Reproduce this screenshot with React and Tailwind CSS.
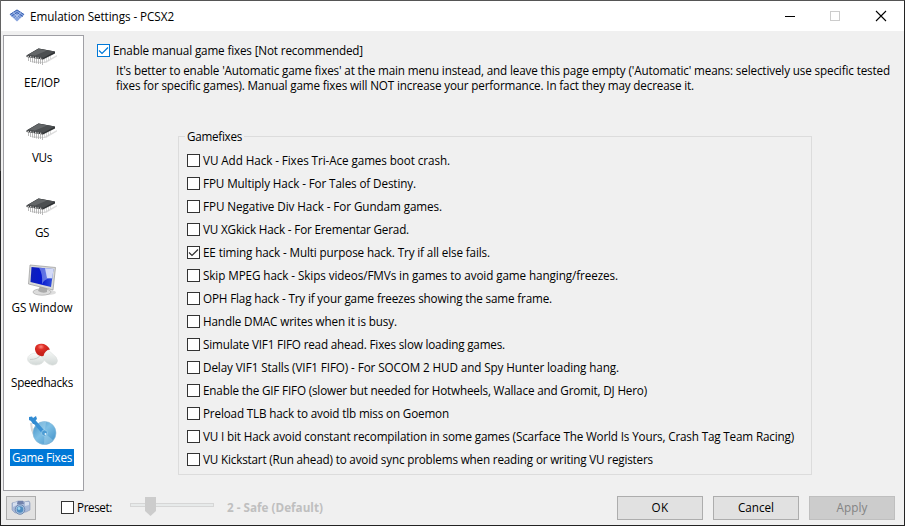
import { useLayoutEffect, useRef } from 'react';

// Text whose tracking is fitted to a given line width.
function Line({ w, className = '', children }) {
  const ref = useRef(null);
  useLayoutEffect(() => {
    const el = ref.current;
    el.style.letterSpacing = '0px';
    const natural = el.getBoundingClientRect().width;
    el.style.letterSpacing = `${(w - natural) / children.length}px`;
  }, [w, children]);
  return (
    <span ref={ref} className={`inline-block whitespace-pre ${className}`}>
      {children}
    </span>
  );
}

function Chip() {
  return (
    <svg width="32" height="32" viewBox="0 0 32 32">
      <path d="M4 22L18 23L31 16L31 17.500L20 24L8 24Z" fill="#dedede" />
      <path d="M2.500 18v4M4.500 18.500v4.500M6.500 19v4.500M8.500 19v5M10.500 19.500v5M12.500 20v5M14.500 20v5M16.500 20v6" stroke="#a8a8a8" strokeWidth=".8" />
      <path d="M18.500 20v4M20.500 19v4M22.500 18v4M24.500 17v3" stroke="#cacaca" strokeWidth=".7" />
      <path d="M0.500 16.500L12.500 9.500L29 12.500V14.500L17 20.500L0.500 18Z" fill="#303335" />
      <path d="M0.500 16.500L12.500 9.500L29 12.500L17.500 18.800Z" fill="#4c4f51" />
      <path d="M3 15.500L12.500 10L21 11.500L9 16.500Z" fill="#75787a" opacity=".6" />
      <path d="M1.500 17.300L16.500 19.500" stroke="#c6c6c6" strokeWidth="1.200" strokeDasharray="1.500 1" />
    </svg>
  );
}

function Monitor() {
  return (
    <svg width="32" height="32" viewBox="0 0 32 32">
      <defs>
        <linearGradient id="screen" x1="0" x2="1">
          <stop offset="0" stopColor="#1020b8" />
          <stop offset=".5" stopColor="#0618d0" />
          <stop offset="1" stopColor="#3857dc" />
        </linearGradient>
      </defs>
      <ellipse cx="22" cy="28.500" rx="8" ry="2.500" fill="#bbb" opacity=".5" />
      <ellipse cx="16" cy="28" rx="9" ry="3.200" fill="#dcdcdc" stroke="#aaa" strokeWidth=".7" />
      <path d="M14 22L21 24L21 28Q17 30 12 27Z" fill="#aaa" />
      <path d="M4 1L29.500 3.500L27 26L2.500 20Z" fill="#d8d9d8" stroke="#999" strokeWidth=".7" />
      <path d="M5.500 3L27.500 5L25 23L4.500 18Z" fill="url(#screen)" />
      <path d="M13 3.800L27.500 5L26.200 15Q18 14 16 20.500Q17 10 13 3.800Z" fill="#98aaf0" opacity=".6" />
      <path d="M19 4.300L27.500 5L26.200 14L21 14Z" fill="#fff" opacity=".7" />
    </svg>
  );
}

function Pills() {
  return (
    <svg width="32" height="32" viewBox="0 0 32 32">
      <defs>
        <radialGradient id="red" cx=".4" cy=".25">
          <stop offset="0" stopColor="#ff8a80" />
          <stop offset=".45" stopColor="#df3028" />
          <stop offset="1" stopColor="#c8221b" />
        </radialGradient>
        <linearGradient id="pill" x1="0" y1="0" x2="0" y2="1">
          <stop offset="0" stopColor="#fcfdfc" />
          <stop offset="1" stopColor="#d0d7d5" />
        </linearGradient>
      </defs>
      <ellipse cx="10" cy="20" rx="8.500" ry="6" fill="url(#pill)" stroke="#dde0df" strokeWidth=".6" />
      <path d="M4 20.500Q12 20.500 15 15.500" stroke="#c9cecc" fill="none" />
      <path d="M21 10L30 18Q33 22 30 25Q25 28 20 23L15 17Z" fill="url(#pill)" stroke="#d8dddb" strokeWidth=".5" />
      <path d="M9.500 12.500Q7.500 6.500 13 5Q20 3.500 24 10.500Q19 11 17.500 17Q12 18 9.500 12.500Z" fill="url(#red)" />
    </svg>
  );
}

function Disc() {
  return (
    <svg width="32" height="32" viewBox="0 0 32 32">
      <defs>
        <linearGradient id="disc" x1="0" y1="0" x2="1" y2="1">
          <stop offset="0" stopColor="#3e8dc5" />
          <stop offset=".45" stopColor="#7fc0e5" />
          <stop offset="1" stopColor="#3a8cc6" />
        </linearGradient>
      </defs>
      <path d="M5 9L6 16L9 23" stroke="#d8d8d8" strokeWidth="2" fill="none" />
      <circle cx="18.500" cy="19" r="11.500" fill="url(#disc)" stroke="#8abbd8" strokeWidth=".6" />
      <path d="M18.500 19L10 11Q15 7 20 8ZM18.500 19L27 26Q24 30 18 30Z" fill="#b6def2" opacity=".4" />
      <path d="M7 6L18 19" stroke="#3b91d4" strokeWidth="3.500" />
      <path d="M3 3L6 2.500L7 4L10 2L11 5L9 7L12 10L7 10L5 7L3 6Z" fill="#328bd2" />
      <circle cx="18.500" cy="19" r="3" fill="#4b9bd3" stroke="#a3d3ed" strokeWidth=".7" />
      <circle cx="19.500" cy="20" r="1" fill="#e3f4fc" />
    </svg>
  );
}

function Camera() {
  return (
    <svg width="20" height="16" viewBox="0 0 20 16">
      <path d="M1 3L5 2L7 1H12L13 2L18 1L19 3V10L15 12L4 13L1 10Z" fill="#a9b9d8" stroke="#8798bb" strokeWidth=".6" />
      <path d="M2 3L6 2V5L2 7ZM14 2L18 2V5L14 6Z" fill="#d5deee" />
      <path d="M7 1H12L13 4H6Z" fill="#7182ab" />
      <circle cx="9" cy="9.500" r="4.800" fill="#a9c3df" stroke="#6681ac" strokeWidth=".9" />
      <circle cx="9" cy="9.500" r="3.300" fill="#4f8cc0" />
      <circle cx="8" cy="8.500" r="1.400" fill="#9fd4ee" />
    </svg>
  );
}

function Logo() {
  return (
    <svg width="16" height="16" viewBox="0 0 16 16">
      <path d="M0.500 6.500L8 1.500L15.500 6.500L8 13.500Z" fill="#86a3de" />
      <path d="M1 6.500L8 2L15 6.500M2.500 8L8 4.500L14 8.500M5 10L8 7.500L11 10" fill="none" stroke="#3a62b3" strokeWidth="1" />
      <path d="M4 4.500L11 10.500M12 4.500L5 10.500" stroke="#c5d5f2" strokeWidth=".8" />
    </svg>
  );
}

function Box({ checked, blue }) {
  return (
    <span className={`block size-[13px] shrink-0 border bg-white ${blue ? 'border-[#0078d7] text-[#0078d7]' : 'border-[#333] text-[#333]'}`}>
      {checked && (
        <svg width="11" height="11" viewBox="0 0 11 11">
          <path d="M1 5.500L4 8.500L10 2.500" fill="none" stroke="currentColor" strokeWidth="1.200" />
        </svg>
      )}
    </span>
  );
}

const pages = [
  ['EE/IOP', 36, Chip],
  ['VUs', 20, Chip],
  ['GS', 14, Chip],
  ['GS Window', 61, Monitor],
  ['Speedhacks', 62, Pills],
  ['Game Fixes', 60, Disc],
];

const fixes = [
  ['VU Add Hack - Fixes Tri-Ace games boot crash.', 247],
  ['FPU Multiply Hack - For Tales of Destiny.', 213],
  ['FPU Negative Div Hack - For Gundam games.', 239],
  ['VU XGkick Hack - For Erementar Gerad.', 206],
  ['EE timing hack - Multi purpose hack. Try if all else fails.', 287],
  ['Skip MPEG hack - Skips videos/FMVs in games to avoid game hanging/freezes.', 415],
  ['OPH Flag hack - Try if your game freezes showing the same frame.', 349],
  ['Handle DMAC writes when it is busy.', 194],
  ['Simulate VIF1 FIFO read ahead. Fixes slow loading games.', 302],
  ['Delay VIF1 Stalls (VIF1 FIFO) - For SOCOM 2 HUD and Spy Hunter loading hang.', 416],
  ['Enable the GIF FIFO (slower but needed for Hotwheels, Wallace and Gromit, DJ Hero)', 444],
  ['Preload TLB hack to avoid tlb miss on Goemon', 246],
  ['VU I bit Hack avoid constant recompilation in some games (Scarface The World Is Yours, Crash Tag Team Racing)', 591],
  ['VU Kickstart (Run ahead) to avoid sync problems when reading or writing VU registers', 450],
];

export default function App() {
  return (
    <div className="h-[526px] w-[905px] bg-[linear-gradient(#666_0,#555_147px,#555_171px,#232323_171px)] pl-px">
      <div className="flex h-[526px] w-[904px] flex-col border-y border-r border-[#232323] border-t-[#555] bg-[#f0f0f0] font-['Open_Sans','Noto_Sans',sans-serif] text-[11.7px] leading-[15px] text-black">
        <header className="flex h-[30px] shrink-0 items-center bg-white pl-2">
          <Logo />
          <Line w={144} className="ml-[5px]">Emulation Settings - PCSX2</Line>
          <svg className="mb-px ml-auto mr-[17px]" width="102" height="12" viewBox="0 0 102 12" fill="none" shapeRendering="crispEdges">
            <path d="M0 6.500H10" stroke="#000" />
            <rect x="45.500" y="1.500" width="9" height="9" stroke="#ccc" />
            <path d="M91 1L101 11M101 1L91 11" stroke="#000" shapeRendering="auto" strokeWidth="1.100" />
          </svg>
        </header>

        <div className="flex h-[460px] shrink-0">
          <nav className="ml-0.5 mt-1 flex h-[456px] w-[81px] shrink-0 flex-col border border-[#a0a0a5] bg-white pr-[3px] pt-[3px]">
            {pages.map(([name, w, Icon], i) => (
              <div key={name} className="flex h-[75px] shrink-0 flex-col items-center">
                <Icon />
                <span className={`mt-[3px] flex h-[17px] items-center px-0.5 pb-px ${i === 5 ? 'bg-[#0078d7] text-white' : ''}`}>
                  <Line w={w}>{name}</Line>
                </span>
              </div>
            ))}
          </nav>

          <main className="flex flex-1 flex-col pl-[13px] pt-3">
            <label className="flex h-[15px] items-center gap-[3px]">
              <Box checked blue />
              <Line w={250}>Enable manual game fixes [Not recommended]</Line>
            </label>
            <div className="ml-[19px] mt-[5px] flex flex-col items-start">
              <Line w={774}>It's better to enable 'Automatic game fixes' at the main menu instead, and leave this page empty ('Automatic' means: selectively use specific tested</Line>
              <Line w={578}>fixes for specific games). Manual game fixes will NOT increase your performance. In fact they may decrease it.</Line>
            </div>
            <fieldset className="ml-[81px] mt-[36px] h-[346px] w-[634px] border border-[#dcdcdc] pl-2">
              <legend className="-ml-0.5 h-[15px] px-0.5">
                <Line w={55}>Gamefixes</Line>
              </legend>
              <div className="mt-[5px] flex flex-col">
                {fixes.map(([text, w], i) => (
                  <label key={text} className="flex h-[23px] items-center gap-[3px]">
                    <Box checked={i === 4} />
                    <Line w={w}>{text}</Line>
                  </label>
                ))}
              </div>
            </fieldset>
          </main>
        </div>

        <footer className="flex flex-1 items-start pl-[5px] pt-[5px]">
          <div className="flex h-6 w-[30px] items-center justify-center border border-[#adadad] bg-[#e1e1e1]">
            <Camera />
          </div>
          <label className="ml-[25px] flex h-6 items-center gap-[3px] pb-px">
            <Box />
            <Line w={35}>Preset:</Line>
          </label>
          <svg className="ml-[18px] mt-px" width="84" height="20" viewBox="0 0 84 20">
            <rect x=".5" y="6.500" width="83" height="3" fill="#e7eaea" stroke="#d6d6d6" />
            <path d="M15 0H26V14L20.500 19L15 14Z" fill="#ccc" />
          </svg>
          <span className="ml-[13px] flex h-6 items-center pb-px font-bold text-[#bfbfbf]">
            <Line w={96}>2 - Safe (Default)</Line>
          </span>
          <div className="ml-auto mr-[9px] flex gap-2.5">
            <div className="flex h-6 w-[86px] items-center justify-center border border-[#adadad] bg-[#e1e1e1] pb-0.5"><Line w={17}>OK</Line></div>
            <div className="flex h-6 w-[86px] items-center justify-center border border-[#adadad] bg-[#e1e1e1] pb-0.5"><Line w={36}>Cancel</Line></div>
            <div className="flex h-6 w-[86px] items-center justify-center border border-[#bfbfbf] bg-[#ccc] pb-0.5 text-[#838383]"><Line w={31}>Apply</Line></div>
          </div>
        </footer>
      </div>
    </div>
  );
}
